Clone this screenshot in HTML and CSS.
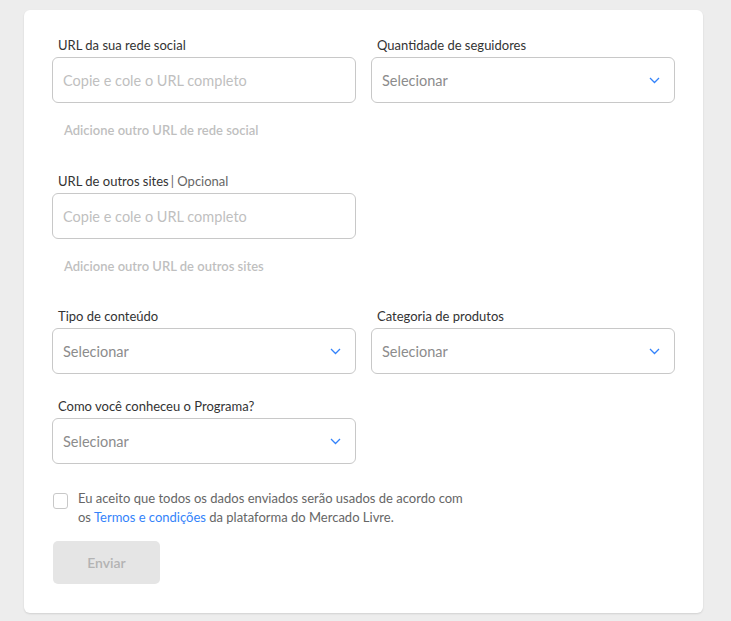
FILE: index.html
```html
<!DOCTYPE html>
<html lang="pt-BR">
<head>
    <meta charset="UTF-8">
    <meta name="viewport" content="width=device-width, initial-scale=1.0">
    <title>Programa de Afiliados - Mercado Livre</title>
    <link rel="stylesheet" href="styles.css">
</head>
<body>
    <div class="form-card">
        <form id="affiliateForm">
            <!-- Redes sociais -->
            <div class="form-row">
                <div class="field">
                    <label for="socialUrl">URL da sua rede social</label>
                    <input type="text" id="socialUrl" class="text-input" placeholder="Copie e cole o URL completo">
                </div>
                <div class="field">
                    <label>Quantidade de seguidores</label>
                    <div class="select-box">
                        <span>Selecionar</span>
                        <svg class="chevron" width="11" height="7" viewBox="0 0 11 7"><path d="M1 1l4.5 4.5L10 1" fill="none" stroke="#3483fa" stroke-width="1.3"/></svg>
                    </div>
                </div>
            </div>
            <div class="add-link">Adicione outro URL de rede social</div>

            <!-- Outros sites -->
            <div class="form-row row-sites">
                <div class="field">
                    <label for="siteUrl">URL de outros sites<span class="optional">| Opcional</span></label>
                    <input type="text" id="siteUrl" class="text-input" placeholder="Copie e cole o URL completo">
                </div>
            </div>
            <div class="add-link">Adicione outro URL de outros sites</div>

            <!-- Conteudo -->
            <div class="form-row row-content">
                <div class="field">
                    <label>Tipo de conteúdo</label>
                    <div class="select-box">
                        <span>Selecionar</span>
                        <svg class="chevron" width="11" height="7" viewBox="0 0 11 7"><path d="M1 1l4.5 4.5L10 1" fill="none" stroke="#3483fa" stroke-width="1.3"/></svg>
                    </div>
                </div>
                <div class="field">
                    <label>Categoria de produtos</label>
                    <div class="select-box">
                        <span>Selecionar</span>
                        <svg class="chevron" width="11" height="7" viewBox="0 0 11 7"><path d="M1 1l4.5 4.5L10 1" fill="none" stroke="#3483fa" stroke-width="1.3"/></svg>
                    </div>
                </div>
            </div>

            <div class="form-row row-program">
                <div class="field">
                    <label>Como você conheceu o Programa?</label>
                    <div class="select-box">
                        <span>Selecionar</span>
                        <svg class="chevron" width="11" height="7" viewBox="0 0 11 7"><path d="M1 1l4.5 4.5L10 1" fill="none" stroke="#3483fa" stroke-width="1.3"/></svg>
                    </div>
                </div>
            </div>

            <!-- Termos -->
            <label class="terms">
                <input type="checkbox" class="terms-check">
                <span class="terms-text">Eu aceito que todos os dados enviados serão usados de acordo com os <a href="#">Termos e condições</a> da plataforma do Mercado Livre.</span>
            </label>

            <button type="submit" class="send-button" disabled>Enviar</button>
        </form>
    </div>
</body>
</html>
```

FILE: styles.css
```css
:root {
    --color-bg: #ededed;
    --color-text: #333333;
    --color-muted: #666666;
    --color-border: #c8c8c8;
    --color-placeholder: #bfbfbf;
    --color-blue: #3483fa;
}

body {
    margin: 0;
    padding: 10px 28px 8px 24px;
    background-color: var(--color-bg);
    font-family: Lato, "Open Sans", sans-serif;
    color: var(--color-text);
}

.form-card {
    background-color: white;
    border-radius: 6px;
    box-shadow: 0 1px 2px rgba(0, 0, 0, 0.12);
    padding: 27px 28px 29px 28px;
}

.form-row {
    display: grid;
    grid-template-columns: 304px 304px;
    column-gap: 15px;
}

.field label {
    display: block;
    font-size: 13px;
    line-height: 16px;
    margin: 0 0 4px 6px;
    color: var(--color-text);
}

.optional {
    color: var(--color-muted);
    margin-left: 2px;
}

.text-input,
.select-box {
    box-sizing: border-box;
    width: 100%;
    height: 46px;
    border: 1px solid var(--color-border);
    border-radius: 6px;
    padding: 0 14px 0 10px;
    font-family: inherit;
    font-size: 14.5px;
    color: var(--color-text);
    background: white;
    margin: 0;
}
.text-input::placeholder {
    color: var(--color-placeholder);
}

.select-box {
    display: flex;
    align-items: center;
    justify-content: space-between;
    color: #8c8c8c;
    cursor: pointer;
}

.add-link {
    margin: 19px 0 0 12px;
    font-size: 13px;
    line-height: 16px;
    font-weight: 600;
    color: var(--color-placeholder);
    cursor: pointer;
}

.row-sites {
    margin-top: 35px;
}
.row-content {
    margin-top: 34px;
}
.row-program {
    margin-top: 24px;
}

.terms {
    display: flex;
    align-items: flex-start;
    gap: 10px;
    margin-top: 25px;
    font-size: 13px;
    line-height: 19px;
    color: var(--color-muted);
    cursor: pointer;
}
.terms-check {
    appearance: none;
    flex: none;
    width: 15px;
    height: 16px;
    margin: 4px 0 0 1px;
    border: 1px solid var(--color-border);
    border-radius: 3px;
    background: white;
}
.terms-text {
    width: 385px;
}
.terms-text a {
    color: var(--color-blue);
    text-decoration: none;
}

.send-button {
    display: block;
    margin: 14px 0 0 1px;
    width: 107px;
    height: 43px;
    border: none;
    border-radius: 5px;
    background-color: #e5e5e5;
    color: #b3b3b3;
    font-family: inherit;
    font-size: 14px;
    font-weight: 600;
}
```
